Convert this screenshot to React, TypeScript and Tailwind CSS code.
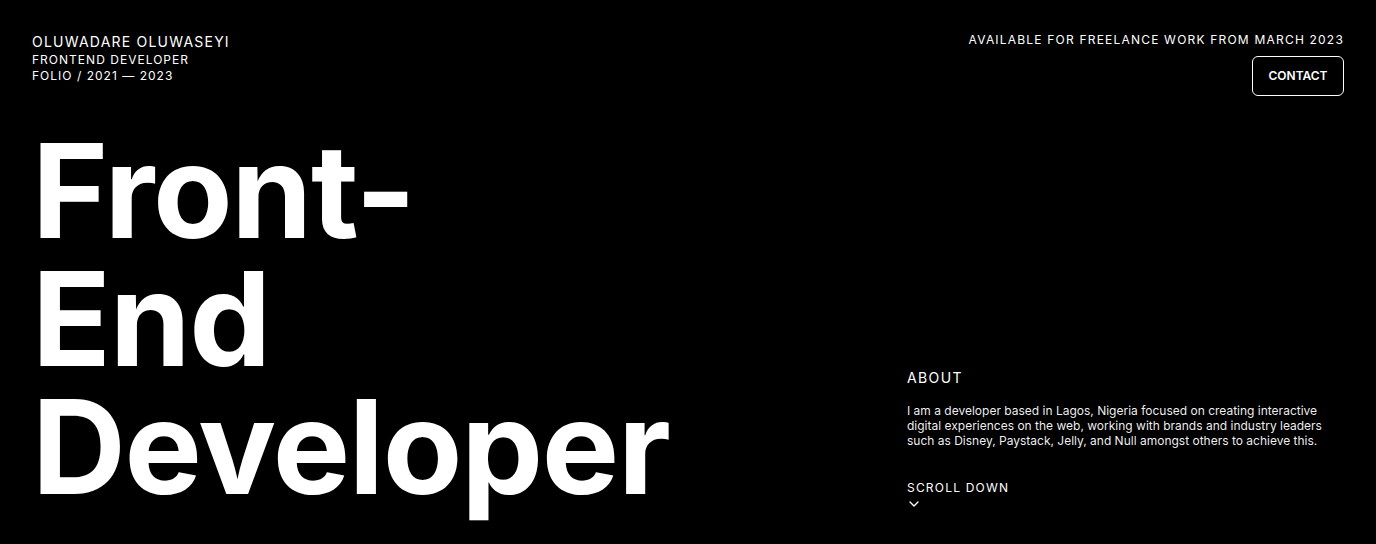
import React from 'react'
import { ChevronDown } from 'lucide-react'

const INTER = "font-['Inter','Liberation_Sans',sans-serif]"

export default function App() {
  return (
    <main className={`w-full h-[544px] bg-black text-white overflow-hidden ${INTER}`}>
      <div className="px-8 pt-[31px] flex justify-between items-start">
        <div className="flex flex-col uppercase">
          <span className="text-[14px] leading-[21px] tracking-[0.087em]">Oluwadare Oluwaseyi</span>
          <span className="text-[12px] leading-[16px] tracking-[0.085em]">Frontend Developer</span>
          <span className="text-[12px] leading-[16px] tracking-[0.085em]">Folio / 2021 — 2023</span>
        </div>
        <div className="flex flex-col items-end mt-[1px]">
          <span className="text-[12px] leading-[16px] tracking-[0.1em] uppercase">
            Available for freelance work from March 2023
          </span>
          <button className="mt-[8px] w-[92px] h-[40px] rounded-[6px] border border-white text-[12px] font-semibold uppercase">
            Contact
          </button>
        </div>
      </div>

      <div className="px-8 flex justify-between items-end">
        <h1 className="text-[130px] leading-[128px] font-bold tracking-[-0.01em] mt-[31px]">
          Front-
          <br />
          End
          <br />
          Developer
        </h1>
        <div className="w-[437px] -mb-[1px]">
          <h2 className="text-[14px] leading-[18px] tracking-[0.1em] uppercase">About</h2>
          <p className="mt-[16px] text-[12px] leading-[15px] text-white/95">
            I am a developer based in Lagos, Nigeria focused on creating interactive digital experiences on the web, working with brands and industry leaders such as Disney, Paystack, Jelly, and Null amongst others to achieve this.
          </p>
          <div className="mt-[32px] text-[12px] leading-[16px] tracking-[0.1em] uppercase">Scroll Down</div>
          <ChevronDown className="w-4 h-4 -ml-[1px]" strokeWidth={2} />
        </div>
      </div>
    </main>
  )
}
